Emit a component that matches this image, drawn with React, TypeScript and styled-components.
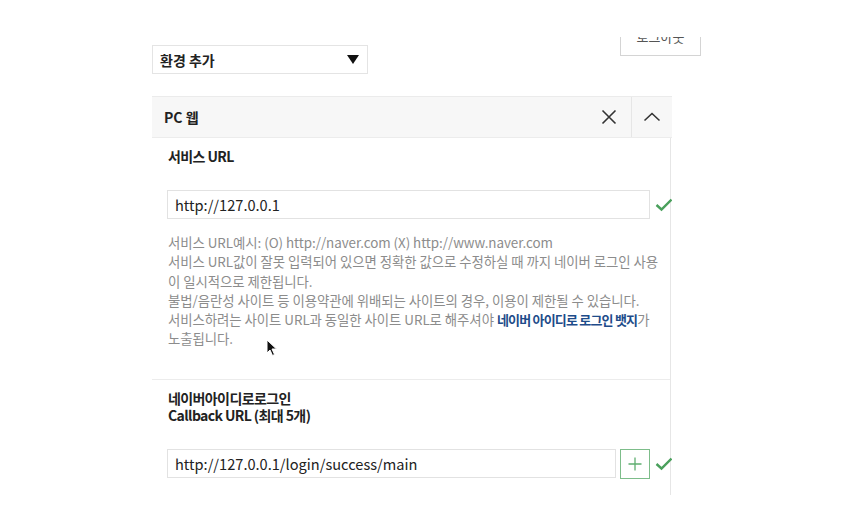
import React from "react";
import styled, { createGlobalStyle } from "styled-components";

const Global = createGlobalStyle`
  html, body { margin: 0; padding: 0; background: #fff; }
  body {
    width: 846px; height: 518px; overflow: hidden;
    font-family: "Noto Sans CJK KR", "Noto Sans", sans-serif;
    color: #222;
  }
  * { box-sizing: border-box; }
`;

const Page = styled.div`
  position: relative;
  padding-left: 152px;
  width: 846px;
  height: 518px;
`;

const TopBar = styled.div`
  display: flex;
  align-items: flex-start;
  width: 549px;
  height: 96px;
`;

const Select = styled.div`
  margin-top: 45px;
  width: 216px;
  height: 29px;
  border: 1px solid #e4e4e4;
  display: flex;
  align-items: center;
  justify-content: space-between;
  padding: 0 8px 0 7px;
  font-size: 14px;
  font-weight: 700;
  color: #222;
`;

const Caret = styled.span`
  width: 0; height: 0;
  border-left: 6px solid transparent;
  border-right: 6px solid transparent;
  border-top: 9px solid #111;
`;

const LogoutClip = styled.div`
  margin-left: auto;
  margin-top: 37px;
  width: 81px;
  height: 19px;
  overflow: hidden;
`;

const LogoutButton = styled.div`
  margin-top: -21px;
  height: 40px;
  border: 1px solid #d4d4d4;
  display: flex;
  align-items: center;
  justify-content: center;
  font-size: 13px;
  color: #555;
  background: #fff;
`;

const Panel = styled.div`
  width: 520px;
  overflow: hidden;
`;

const Header = styled.div`
  display: flex;
  align-items: stretch;
  height: 42px;
  background: #f7f7f7;
  border-top: 1px solid #ebebeb;
  border-bottom: 1px solid #ececec;
`;

const HeaderTitle = styled.div`
  flex: 1;
  display: flex;
  align-items: center;
  padding-left: 12px;
  font-size: 14px;
  font-weight: 700;
  color: #222;
`;

const HeaderButton = styled.div<{ $divider?: boolean }>`
  width: ${(p) => (p.$divider ? "41px" : "44px")};
  display: flex;
  align-items: center;
  justify-content: center;
  border-left: ${(p) => (p.$divider ? "1px solid #e6e6e6" : "none")};
`;

const Body = styled.div`
  width: 519px;
  border-right: 1px solid #e6e6e6;
`;

const Section = styled.div<{ $top?: boolean; $pb: number }>`
  padding: 10px 0 ${(p) => p.$pb}px 15px;
  border-top: ${(p) => (p.$top ? "1px solid #ececec" : "none")};
`;

const Label = styled.div`
  font-size: 14px;
  font-weight: 700;
  line-height: 17px;
  color: #222;
  padding-left: 1px;
  letter-spacing: -0.6px;
`;

const InputRow = styled.div<{ $mt: number }>`
  display: flex;
  align-items: center;
  margin-top: ${(p) => p.$mt}px;
  width: 520px;
`;

const Input = styled.div<{ $w: number }>`
  width: ${(p) => p.$w}px;
  height: 29px;
  border: 1px solid #e2e2e2;
  display: flex;
  align-items: center;
  padding-left: 7px;
  font-size: 14.6px;
  color: #222;
`;

const PlusButton = styled.div`
  margin-left: 4px;
  width: 30px;
  height: 30px;
  border: 1px solid #7dbd8a;
  display: flex;
  align-items: center;
  justify-content: center;
`;

const Check = styled.svg`
  margin-left: 5px;
  flex: none;
`;

const Help = styled.div`
  margin-top: 14px;
  width: 493px;
  padding-left: 1px;
  font-size: 13.4px;
  line-height: 19.3px;
  color: #8c8c8c;
  letter-spacing: -0.05px;
`;

const Strong = styled.b`
  color: #1e4c8a;
  font-weight: 700;
  font-size: 13px;
  letter-spacing: -0.8px;
`;

const Cursor = styled.svg`
  position: absolute;
  left: 266px;
  top: 339px;
`;

function CheckIcon() {
  return (
    <Check width="18" height="14" viewBox="0 0 18 14">
      <path d="M1.5 7 L6.5 11.5 L16.5 1.5" fill="none" stroke="#4aa05c" strokeWidth="2.4" />
    </Check>
  );
}

export default function App() {
  return (
    <Page>
      <Global />
      <TopBar>
        <Select>
          <span>환경 추가</span>
          <Caret />
        </Select>
        <LogoutClip>
          <LogoutButton>로그아웃</LogoutButton>
        </LogoutClip>
      </TopBar>
      <Panel>
        <Header>
          <HeaderTitle>PC 웹</HeaderTitle>
          <HeaderButton>
            <svg width="16" height="16" viewBox="0 0 16 16">
              <path d="M1.5 1.5 L14.5 14.5 M14.5 1.5 L1.5 14.5" stroke="#333" strokeWidth="1.6" fill="none" />
            </svg>
          </HeaderButton>
          <HeaderButton $divider>
            <svg width="18" height="10" viewBox="0 0 18 10">
              <path d="M1.5 8.5 L9 1.5 L16.5 8.5" stroke="#333" strokeWidth="1.6" fill="none" />
            </svg>
          </HeaderButton>
        </Header>
        <Body>
          <Section $pb={30}>
            <Label>서비스 URL</Label>
            <InputRow $mt={25}>
              <Input $w={483}>http://127.0.0.1</Input>
              <CheckIcon />
            </InputRow>
            <Help>
              서비스 URL예시: (O) http://naver.com (X) http://www.naver.com
              <br />
              서비스 URL값이 잘못 입력되어 있으면 정확한 값으로 수정하실 때 까지 네이버 로그인 사용이 일시적으로 제한됩니다.
              <br />
              불법/음란성 사이트 등 이용약관에 위배되는 사이트의 경우, 이용이 제한될 수 있습니다.
              <br />
              서비스하려는 사이트 URL과 동일한 사이트 URL로 해주셔야 <Strong>네이버 아이디로 로그인 뱃지</Strong>가 노출됩니다.
            </Help>
          </Section>
          <Section $top $pb={16}>
            <Label>
              네이버아이디로로그인
              <br />
              Callback URL (최대 5개)
            </Label>
            <InputRow $mt={25}>
              <Input $w={449}>http://127.0.0.1/login/success/main</Input>
              <PlusButton>
                <svg width="14" height="14" viewBox="0 0 14 14">
                  <path d="M7 0.5 V13.5 M0.5 7 H13.5" stroke="#5fae70" strokeWidth="1.3" fill="none" />
                </svg>
              </PlusButton>
              <CheckIcon />
            </InputRow>
          </Section>
        </Body>
      </Panel>
      <Cursor width="12" height="18" viewBox="0 0 12 18">
        <path d="M1 1 L1 14 L4 11 L6.5 16.5 L8.5 15.5 L6 10 L10.5 10 Z" fill="#111" stroke="#fff" strokeWidth="1" />
      </Cursor>
    </Page>
  );
}
